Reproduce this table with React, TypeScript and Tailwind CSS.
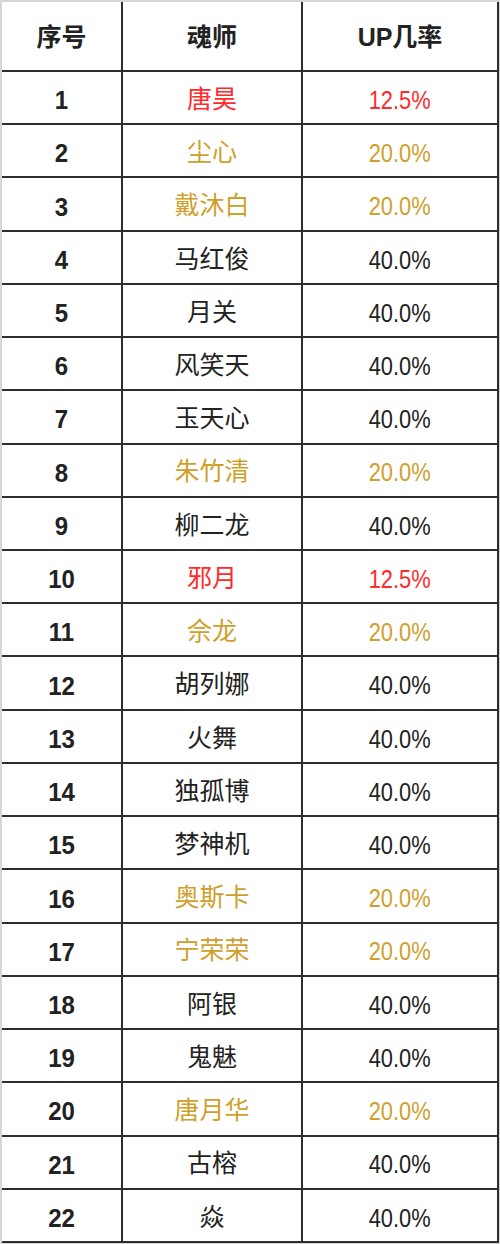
import React from "react";

type Row = { name: string; rate: string; tone: "red" | "gold" | "black" };

const rows: Row[] = [
  { name: "唐昊", rate: "12.5%", tone: "red" },
  { name: "尘心", rate: "20.0%", tone: "gold" },
  { name: "戴沐白", rate: "20.0%", tone: "gold" },
  { name: "马红俊", rate: "40.0%", tone: "black" },
  { name: "月关", rate: "40.0%", tone: "black" },
  { name: "风笑天", rate: "40.0%", tone: "black" },
  { name: "玉天心", rate: "40.0%", tone: "black" },
  { name: "朱竹清", rate: "20.0%", tone: "gold" },
  { name: "柳二龙", rate: "40.0%", tone: "black" },
  { name: "邪月", rate: "12.5%", tone: "red" },
  { name: "佘龙", rate: "20.0%", tone: "gold" },
  { name: "胡列娜", rate: "40.0%", tone: "black" },
  { name: "火舞", rate: "40.0%", tone: "black" },
  { name: "独孤博", rate: "40.0%", tone: "black" },
  { name: "梦神机", rate: "40.0%", tone: "black" },
  { name: "奥斯卡", rate: "20.0%", tone: "gold" },
  { name: "宁荣荣", rate: "20.0%", tone: "gold" },
  { name: "阿银", rate: "40.0%", tone: "black" },
  { name: "鬼魅", rate: "40.0%", tone: "black" },
  { name: "唐月华", rate: "20.0%", tone: "gold" },
  { name: "古榕", rate: "40.0%", tone: "black" },
  { name: "焱", rate: "40.0%", tone: "black" },
];

const toneClass = {
  red: "text-[#ff2a2a]",
  gold: "text-[#cf9f2c]",
  black: "text-[#222222]",
};

const cjk = "font-['Liberation_Sans','Noto_Sans_CJK_SC',sans-serif]";

export default function App() {
  return (
    <div className="w-[500px] h-[1244px] bg-[#d6d6d6] pt-[2px] pl-[2px] pr-[1px] pb-[1px]">
      <div
        className={`w-full h-full bg-[#2e2e2e] pr-[2px] pb-[2px] grid grid-cols-[119px_178px_194px] grid-rows-[68px_repeat(22,1fr)] gap-[2px] ${cjk}`}
      >
        <div className="bg-white flex items-center justify-center text-[25px] font-bold text-[#222] pt-[3px]">序号</div>
        <div className="bg-white flex items-center justify-center text-[25px] font-bold text-[#222] pt-[3px]">魂师</div>
        <div className="bg-white flex items-center justify-center text-[25px] font-bold text-[#222] pt-[3px]">UP几率</div>
        {rows.map((r, i) => (
          <React.Fragment key={i}>
            <div className="bg-white flex items-center justify-center text-[24px] font-bold text-[#222] pt-[5px]">
              <span className="inline-block scale-y-[1.1]">{i + 1}</span>
            </div>
            <div className={`bg-white flex items-center justify-center text-[25px] pt-[4px] ${toneClass[r.tone]}`}>
              {r.name}
            </div>
            <div className={`bg-white flex items-center justify-center text-[23px] pt-[5px] ${toneClass[r.tone]}`}>
              <span className="inline-block scale-y-[1.15] scale-x-[0.95]">{r.rate}</span>
            </div>
          </React.Fragment>
        ))}
      </div>
    </div>
  );
}
